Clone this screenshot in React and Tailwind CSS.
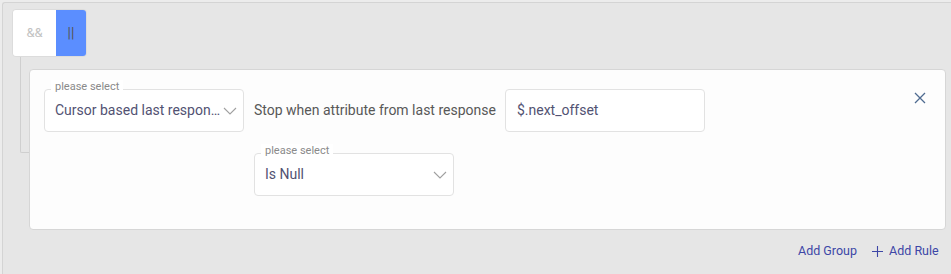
import React from "react";

function Chevron() {
  return (
    <svg width="14" height="8" viewBox="0 0 14 8" fill="none" className="shrink-0">
      <path d="M1 1l6 6 6-6" stroke="#a0a0a0" strokeWidth="1.1" />
    </svg>
  );
}

function Select({ value, width = "w-[200px]" }) {
  return (
    <div className={`relative ${width} h-[43px] shrink-0 rounded-[4px] border border-[#e2e2e2] bg-white flex items-center pl-[10px] pr-[6px]`}>
      <span className="absolute -top-[10px] left-[6px] bg-white px-[4px] text-[11px] leading-[14px] text-[#8a8a8a]">
        please select
      </span>
      <span className="flex-1 truncate text-[14px] text-[#525272]">{value}</span>
      <Chevron />
    </div>
  );
}

export default function App() {
  return (
    <div className="w-[951px] h-[274px] overflow-hidden bg-[#ececec] pl-[2px] pt-[2px]" style={{ fontFamily: "Roboto, 'Liberation Sans', sans-serif" }}>
      <div className="w-[1000px] h-[300px] bg-[#e6e6e6] border-l border-t border-[#d4d4d4] rounded-tl-[3px] pl-[9px] pt-[6px]">
        <div className="flex w-[75px] h-[48px] rounded-[4px] overflow-hidden border border-[#dcdcdc]">
          <div className="w-[43px] bg-white flex items-center justify-center text-[13px] text-[#c2c2c2]">&amp;&amp;</div>
          <div className="flex-1 bg-[#5b8eff] flex items-center justify-center text-[14px] text-[#555]">||</div>
        </div>
        <div className="flex items-start pl-[8px]">
          <div className="w-[9px] h-[96px] shrink-0 border-l border-b border-[#cfcfcf] rounded-bl-[2px]" />
          <div className="mt-[12px] w-[917px] h-[161px] shrink-0 rounded-[4px] border border-[#d6d6d6] bg-[#fdfdfd] pl-[14px] pt-[19px] relative">
            <div className="flex items-center">
              <Select value="Cursor based last response" />
              <span className="ml-[10px] text-[14px] text-[#585858]">Stop when attribute from last response</span>
              <div className="ml-[9px] w-[200px] h-[43px] rounded-[4px] border border-[#e2e2e2] bg-white flex items-center pl-[11px] text-[14px] text-[#525272]">
                $.next_offset
              </div>
            </div>
            <div className="mt-[21px] ml-[210px]">
              <Select value="Is Null" />
            </div>
            <button className="absolute top-[22px] right-[19px] w-[12px] h-[12px]">
              <svg width="12" height="12" viewBox="0 0 12 12">
                <path d="M1 1l10 10M11 1L1 11" stroke="#4f6b90" strokeWidth="1.3" />
              </svg>
            </button>
          </div>
        </div>
        <div className="flex justify-start pl-[786px] mt-[12px] items-center gap-[15px] text-[12.5px] text-[#3d47a6]">
          <span>Add Group</span>
          <span className="flex items-center gap-[6px]">
            <svg width="11" height="11" viewBox="0 0 11 11">
              <path d="M5.5 0v11M0 5.5h11" stroke="#3d47a6" strokeWidth="1.1" />
            </svg>
            Add Rule
          </span>
        </div>
      </div>
    </div>
  );
}
